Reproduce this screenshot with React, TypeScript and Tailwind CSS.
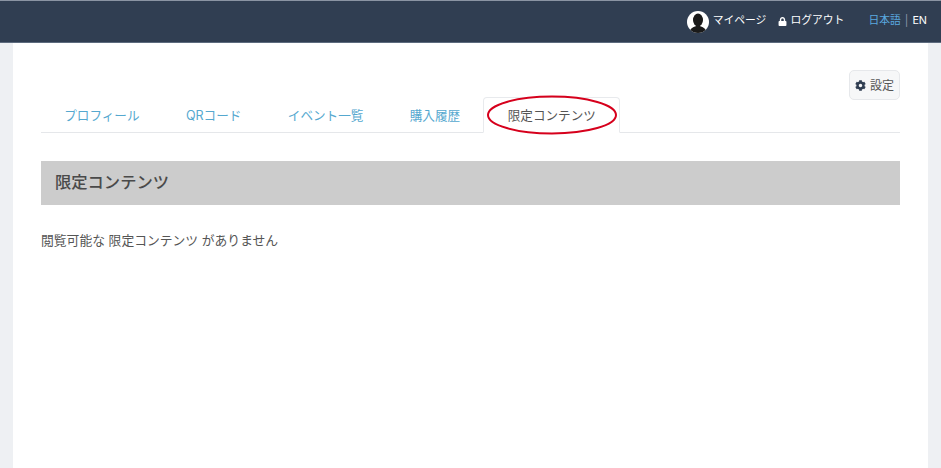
import { FaCog, FaLock } from "react-icons/fa";

const font = { fontFamily: 'Inter, "Noto Sans CJK JP", sans-serif' };

const tabs = ["プロフィール", "QRコード", "イベント一覧", "購入履歴"];

export default function App() {
  return (
    <div
      className="h-[468px] w-[941px] overflow-hidden bg-[#eef0f3] text-[#555]"
      style={font}
    >
      {/* Top bar */}
      <header className="flex h-[43px] items-center justify-end border-t border-b border-t-[#8a94a3] border-b-[#5d6b7e] bg-[#303e52] pr-[14px] text-[10.8px] text-white">
        <div className="flex items-center gap-[4px]">
          <svg width="22" height="22" viewBox="0 0 22 22">
            <circle cx="11" cy="11" r="11" fill="#fff" />
            <clipPath id="avatar">
              <circle cx="11" cy="11" r="11" />
            </clipPath>
            <g clipPath="url(#avatar)" fill="#1a1a1a">
              <ellipse cx="11" cy="9" rx="5" ry="6.5" />
              <path d="M2 22c1-5 5-6 7-7h4c2 1 6 2 7 7z" />
            </g>
          </svg>
          <span className="-mt-[1px]">マイページ</span>
        </div>
        <div className="ml-[12px] flex items-center gap-[3px]">
          <FaLock size={9} />
          <span className="-mt-[1px]">ログアウト</span>
        </div>
        <div className="-mt-[1px] ml-[24px] flex items-center">
          <span className="text-[#5aa9e0]">日本語</span>
          <span className="mx-[4px] text-[#8d99a8]">|</span>
          <span>EN</span>
        </div>
      </header>

      {/* Page body */}
      <main className="mx-[13px] h-[425px] bg-white px-[28px] pt-[27px]">
        <div className="flex justify-end">
          <button className="flex h-[30px] w-[51px] items-center justify-center gap-[4px] rounded-[5px] border border-[#e6e8eb] bg-[#f6f7f8] text-[12px] text-[#555]">
            <FaCog size={11} color="#303e52" />
            <span className="pt-[1px]">設定</span>
          </button>
        </div>

        <div className="relative -mt-[3px] flex h-[36px] border-b border-[#e5e7ea]">
          {tabs.map((tab) => (
            <div
              key={tab}
              className="flex h-[36px] items-center px-[23.2px] pt-[3px] text-[12.6px] text-[#55a8cf]"
            >
              {tab}
            </div>
          ))}
          <div className="flex h-[36px] w-[137px] items-center justify-center rounded-t-[4px] border border-[#e8eaed] border-b-white bg-white pt-[3px] text-[12.6px] text-[#555]">
            限定コンテンツ
          </div>
          <svg
            className="absolute left-[445px] top-[-2px]"
            width="132"
            height="40"
            viewBox="0 0 132 40"
            fill="none"
          >
            <ellipse cx="66" cy="20" rx="64" ry="18.5" stroke="#d6001c" strokeWidth="2" />
          </svg>
        </div>

        <h2 className="mt-[28px] flex h-[44px] items-center bg-[#cccccc] px-[14px] pb-[2px] text-[16.3px] font-medium text-[#4a4a4a]">
          限定コンテンツ
        </h2>

        <p className="mt-[26px] text-[12.8px] leading-[20px]">閲覧可能な 限定コンテンツ がありません</p>
      </main>
    </div>
  );
}
